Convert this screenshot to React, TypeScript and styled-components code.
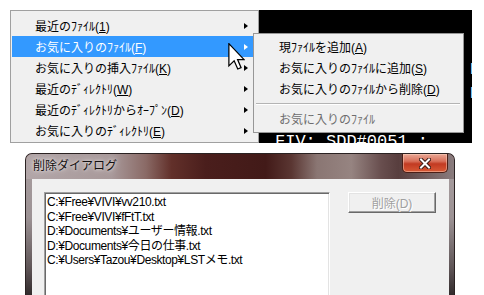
import React from 'react';
import styled, { createGlobalStyle } from 'styled-components';

const GlobalStyle = createGlobalStyle`
  * { box-sizing: border-box; }
  html, body { margin: 0; padding: 0; background: #fff; }
  body {
    width: 484px;
    height: 295px;
    overflow: hidden;
    font-family: "Liberation Sans", "Noto Sans CJK JP", sans-serif;
    font-size: 12px;
  }
`;

const Page = styled.div`
  width: 484px;
  height: 295px;
  overflow: hidden;
  display: flex;
  flex-direction: column;
`;

const TopArea = styled.div`
  position: relative;
  display: flex;
  padding: 10px 0 0 10px;
  height: 143px;
  flex-shrink: 0;
`;

const MainMenu = styled.div`
  width: 249px;
  height: 133px;
  padding: 4px 0 2px;
  background: #f0f0f0;
  border: 1px solid #a0a0a0;
  display: flex;
  flex-direction: column;
`;

const MenuRow = styled.div<{ $active?: boolean; $disabled?: boolean }>`
  height: 21px;
  flex-shrink: 0;
  margin: 0 1px;
  padding: 0 9px 0 23px;
  display: flex;
  align-items: center;
  justify-content: space-between;
  white-space: nowrap;
  background: ${(p) => (p.$active ? '#3399ff' : 'transparent')};
  color: ${(p) => (p.$active ? '#fff' : p.$disabled ? '#6d6d6d' : '#000')};
`;

const SubArrow = styled.span<{ $active?: boolean }>`
  width: 0;
  height: 0;
  border-top: 3.5px solid transparent;
  border-bottom: 3.5px solid transparent;
  border-left: 4px solid ${(p) => (p.$active ? '#fff' : '#000')};
`;

const Terminal = styled.div`
  width: 213px;
  height: 133px;
  background: #000;
  color: #fff;
  overflow: hidden;
  padding-left: 16px;
  font-family: "Liberation Mono", monospace;
  font-size: 17px;
`;

const TermLine = styled.div<{ $indent?: number }>`
  height: 24px;
  line-height: 24px;
  white-space: pre;
  padding-left: ${(p) => p.$indent ?? 0}px;
`;

const SubMenu = styled.div`
  position: absolute;
  left: 253px;
  top: 33px;
  width: 211px;
  height: 100px;
  padding: 2px 0 3px;
  background: #f0f0f0;
  border: 1px solid #979797;
  display: flex;
  flex-direction: column;
`;

const SubRow = styled(MenuRow)`
  margin: 0 1px;
  padding-left: 24px;
`;

const Separator = styled.div`
  height: 9px;
  flex-shrink: 0;
  margin: 0 3px 0 2px;
  display: flex;
  flex-direction: column;
  justify-content: center;
  &::before {
    content: '';
    height: 1px;
    background: #b4b4b4;
  }
  &::after {
    content: '';
    height: 1px;
    background: #fff;
  }
`;

const Cursor = styled.svg`
  position: absolute;
  left: 228px;
  top: 43px;
`;

const DialogArea = styled.div`
  padding: 10px 0 0 25px;
`;

const Dialog = styled.div`
  width: 430px;
  height: 160px;
  border: 1px solid #2a2222;
  border-bottom: none;
  border-radius: 7px 7px 0 0;
  overflow: hidden;
  display: flex;
  flex-direction: column;
  background-color: #9c9294;
  background-image: linear-gradient(180deg, #a99ea0 0%, #9c9294 40%, #5e5456 72%, #141010 100%);
`;

const TitleBar = styled.div`
  height: 25px;
  flex-shrink: 0;
  display: flex;
  align-items: flex-start;
  padding-left: 7px;
  background-color: #5a3030;
  background-image: linear-gradient(90deg, #b2a6a8 0%, #a8999a 20%, #8a6a66 28%, #62302a 34%, #4a1e1c 42%, #421a18 56%, #5a3632 62%, #8a7673 68%, #968481 76%, #684e4e 83%, #583e3e 87%, #8a7c7e 100%);
`;

const Title = styled.span`
  line-height: 24px;
  font-size: 12px;
  color: #141010;
  text-shadow: 0 0 6px rgba(255, 255, 255, 0.85), 0 0 3px rgba(255, 255, 255, 0.6);
`;

const CloseButton = styled.div`
  margin-left: auto;
  margin-right: 6px;
  width: 46px;
  height: 19px;
  border: 1px solid #4a1e16;
  border-top: none;
  border-radius: 0 0 5px 5px;
  background: linear-gradient(180deg, #eaa896 0%, #d8705a 40%, #c23a22 55%, #d85a36 100%);
  box-shadow: inset 0 0 0 1px rgba(255, 220, 200, 0.45);
  display: flex;
  align-items: center;
  justify-content: center;
`;

const ClientArea = styled.div`
  flex: 1;
  margin: 0 5px 0 6px;
  background: #f0f0f0;
  display: flex;
  align-items: flex-start;
  gap: 18px;
  padding: 13px 0 0 12px;
`;

const ListBox = styled.div`
  width: 286px;
  height: 120px;
  background: #fff;
  border: 1px solid;
  border-color: #a0a0a0 #fff #fff #a0a0a0;
  box-shadow: inset 1px 1px 0 #696969, inset -1px -1px 0 #e3e3e3;
  padding: 2px 2px;
`;

const ListItem = styled.div`
  line-height: 14.5px;
  font-size: 12px;
  letter-spacing: -0.4px;
  white-space: nowrap;
  color: #000;
`;

const PushButton = styled.div`
  width: 88px;
  height: 21px;
  background: #f0f0f0;
  border: 1px solid;
  border-color: #fff #696969 #696969 #fff;
  box-shadow: inset -1px -1px 0 #a0a0a0, inset 1px 1px 0 #e3e3e3;
  display: flex;
  align-items: center;
  justify-content: center;
  color: #a0a0a0;
  text-shadow: 1px 1px 0 #fff;
  font-size: 12px;
`;

const mainItems = [
  { pre: '最近のﾌｧｲﾙ(', key: '1', post: ')' },
  { pre: 'お気に入りのﾌｧｲﾙ(', key: 'F', post: ')', active: true },
  { pre: 'お気に入りの挿入ﾌｧｲﾙ(', key: 'K', post: ')' },
  { pre: '最近のﾃﾞｨﾚｸﾄﾘ(', key: 'W', post: ')' },
  { pre: '最近のﾃﾞｨﾚｸﾄﾘからｵｰﾌﾟﾝ(', key: 'D', post: ')' },
  { pre: 'お気に入りのﾃﾞｨﾚｸﾄﾘ(', key: 'E', post: ')' },
];

const subItems = [
  { pre: '現ﾌｧｲﾙを追加(', key: 'A', post: ')' },
  { pre: 'お気に入りのﾌｧｲﾙに追加(', key: 'S', post: ')' },
  { pre: 'お気に入りのﾌｧｲﾙから削除(', key: 'D', post: ')' },
];

const files = [
  'C:¥Free¥VIVI¥vv210.txt',
  'C:¥Free¥VIVI¥fFtT.txt',
  'D:¥Documents¥ユーザー情報.txt',
  'D:¥Documents¥今日の仕事.txt',
  'C:¥Users¥Tazou¥Desktop¥LSTメモ.txt',
];

const termLines = [
  { text: '' },
  { text: '' },
  { text: 'R', indent: 195 },
  { text: 'R', indent: 195 },
  { text: '' },
  { text: 'FIV: SDD#0051 :' },
];

const App = () => {
  return (
    <>
      <GlobalStyle />
      <Page>
        <TopArea>
          <MainMenu>
            {mainItems.map((it, i) => (
              <MenuRow key={i} $active={it.active}>
                <span>
                  {it.pre}
                  <u>{it.key}</u>
                  {it.post}
                </span>
                <SubArrow $active={it.active} />
              </MenuRow>
            ))}
          </MainMenu>
          <Terminal>
            {termLines.map((l, i) => (
              <TermLine key={i} $indent={l.indent}>
                {l.text}
              </TermLine>
            ))}
          </Terminal>
          <SubMenu>
            {subItems.map((it, i) => (
              <SubRow key={i}>
                <span>
                  {it.pre}
                  <u>{it.key}</u>
                  {it.post}
                </span>
              </SubRow>
            ))}
            <Separator />
            <SubRow $disabled>
              <span>お気に入りのﾌｧｲﾙ</span>
            </SubRow>
          </SubMenu>
          <Cursor width="17" height="27" viewBox="0 0 12 19.5">
            <path
              d="M0.5 0.5 L0.5 16.5 L4.3 12.8 L6.9 18.8 L9.3 17.8 L6.8 12 L11.5 12 Z"
              fill="#fff"
              stroke="#000"
              strokeWidth="0.9"
              strokeLinejoin="miter"
            />
          </Cursor>
        </TopArea>
        <DialogArea>
          <Dialog>
            <TitleBar>
              <Title>削除ダイアログ</Title>
              <CloseButton>
                <svg width="12" height="11" viewBox="0 0 12 11">
                  <path d="M2 1.5 L10 9.5 M10 1.5 L2 9.5" stroke="#3a1a14" strokeWidth="4" strokeLinecap="square" />
                  <path d="M2 1.5 L10 9.5 M10 1.5 L2 9.5" stroke="#fff" strokeWidth="2" strokeLinecap="square" />
                </svg>
              </CloseButton>
            </TitleBar>
            <ClientArea>
              <ListBox>
                {files.map((f) => (
                  <ListItem key={f}>{f}</ListItem>
                ))}
              </ListBox>
              <PushButton>削除(D)</PushButton>
            </ClientArea>
          </Dialog>
        </DialogArea>
      </Page>
    </>
  );
};

export default App;
